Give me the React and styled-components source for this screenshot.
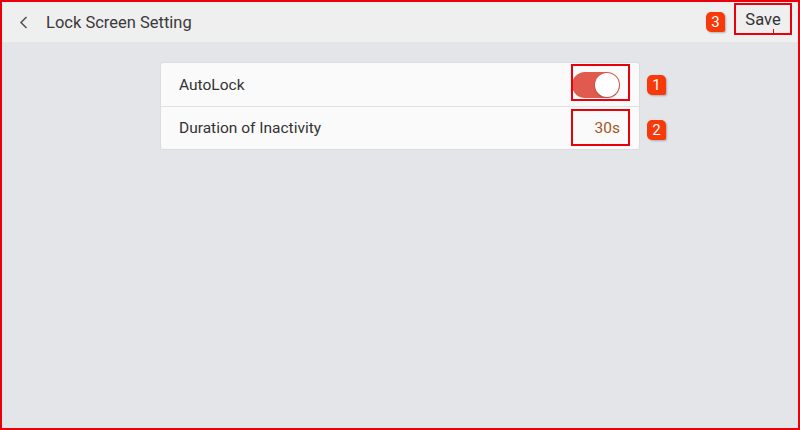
import styled, { createGlobalStyle } from "styled-components";

const GlobalStyle = createGlobalStyle`
  html, body {
    margin: 0;
    padding: 0;
    background: #e4e5e9;
  }
  * {
    box-sizing: border-box;
  }
`;

const Frame = styled.div`
  width: 800px;
  height: 430px;
  border: 2px solid #e8000b;
  background: #e4e5e9;
  display: flex;
  flex-direction: column;
  font-family: Roboto, "Liberation Sans", sans-serif;
  color: #333;
`;

const Header = styled.header`
  height: 40px;
  flex: none;
  background: #efefef;
  display: flex;
  align-items: center;
  padding: 0 6px 0 17px;
`;

const BackButton = styled.button`
  border: 0;
  background: none;
  padding: 0;
  width: 12px;
  height: 14px;
  display: flex;
  align-items: center;
  cursor: pointer;
`;

const Title = styled.h1`
  margin: 0 0 0 15px;
  font-size: 16.5px;
  font-weight: 400;
  color: #3a3a3a;
  flex: 1;
`;

const Badge = styled.span`
  position: absolute;
  width: 19px;
  height: 20px;
  border-radius: 5px 5px 2px 5px;
  background: #f8390a;
  color: #fff;
  font-size: 15px;
  display: flex;
  align-items: center;
  justify-content: center;
  box-shadow: 1px 1px 2px rgba(0, 0, 0, 0.25);
  left: ${p => p.left}px;
  top: ${p => p.top}px;
`;

const SaveWrap = styled.div`
  position: relative;
  display: flex;
  align-items: center;
`;

const SaveButton = styled.button`
  position: relative;
  width: 58px;
  height: 32px;
  border: 2px solid #e8000b;
  background: transparent;
  font-family: inherit;
  font-size: 16.5px;
  color: #333;
  padding: 0;
  margin-top: -6px;
  cursor: pointer;

  &::after {
    content: "";
    position: absolute;
    left: 37px;
    bottom: -1px;
    width: 1px;
    height: 5px;
    background: #e8000b;
  }
`;

const Content = styled.main`
  flex: 1;
  display: flex;
  justify-content: center;
  align-items: flex-start;
  padding-top: 20px;
`;

const Card = styled.section`
  width: 480px;
  background: #fafafa;
  border: 1px solid #dcdcdc;
  border-radius: 3px;
`;

const Row = styled.div`
  position: relative;
  height: 43px;
  display: flex;
  align-items: center;
  justify-content: space-between;
  padding: 0 18px;
  font-size: 15.5px;
  border-top: ${p => (p.first ? "0" : "1px solid #e1e1e1")};
`;

const Highlight = styled.div`
  position: absolute;
  right: 9px;
  top: ${p => p.top}px;
  width: 59px;
  height: 37px;
  border: 2px solid #e8000b;
  pointer-events: none;
`;

const Toggle = styled.div`
  position: relative;
  width: 48px;
  height: 26px;
  border-radius: 13px;
  background: #e05a4e;
  margin-right: 1px;

  &::after {
    content: "";
    position: absolute;
    right: 1px;
    top: 1px;
    width: 24px;
    height: 24px;
    border-radius: 50%;
    background: #fff;
    box-shadow: 0 1px 2px rgba(0, 0, 0, 0.25);
  }
`;

const Value = styled.span`
  color: #a4541c;
  font-size: 15.5px;
  margin-right: 1px;
`;

function App() {
  return (
    <>
      <GlobalStyle />
      <Frame>
        <Header>
          <BackButton aria-label="back">
            <svg width="9" height="13" viewBox="0 0 9 13">
              <path d="M7.5 1 L2 6.5 L7.5 12" fill="none" stroke="#555" strokeWidth="1.6" />
            </svg>
          </BackButton>
          <Title>Lock Screen Setting</Title>
          <SaveWrap>
            <Badge left={-28} top={3}>3</Badge>
            <SaveButton>Save</SaveButton>
          </SaveWrap>
        </Header>
        <Content>
          <Card>
            <Row first>
              <span>AutoLock</span>
              <Toggle />
              <Highlight top={1} />
              <Badge left={486} top={12}>1</Badge>
            </Row>
            <Row>
              <span>Duration of Inactivity</span>
              <Value>30s</Value>
              <Highlight top={2} />
              <Badge left={486} top={13}>2</Badge>
            </Row>
          </Card>
        </Content>
      </Frame>
    </>
  );
}

export default App;
